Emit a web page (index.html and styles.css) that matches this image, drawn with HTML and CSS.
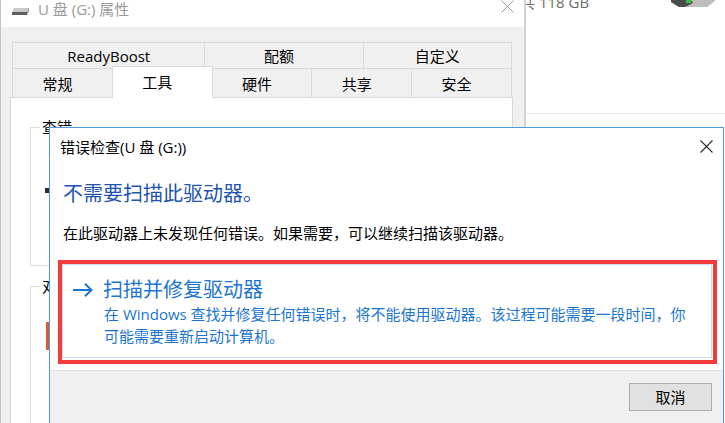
FILE: index.html
```html
<!DOCTYPE html>
<html lang="zh-CN">
<head>
    <meta charset="UTF-8">
    <meta name="viewport" content="width=device-width, initial-scale=1.0">
    <title>错误检查(U 盘 (G:))</title>
    <link rel="stylesheet" href="styles.css">
</head>
<body>
    <div class="desk">
        <!-- 属性窗口（在后面） -->
        <div class="props">
            <div class="props-title">
                <svg class="drive-sm" width="17" height="7" viewBox="0 0 17 7">
                    <polygon points="2,0 17,0 15,4 0,4" fill="#c9c9c9"/>
                    <polygon points="0,4 15,4 15,7 0,7" fill="#5e5e5e"/>
                    <polygon points="15,4 17,0 17,3 15,7" fill="#8a8a8a"/>
                </svg>
                <span class="props-name">U 盘 (G:) 属性</span>
                <svg class="props-close" width="13" height="13" viewBox="0 0 13 13">
                    <path d="M0.5 0.5 L12.5 12.5 M12.5 0.5 L0.5 12.5" stroke="#9b9b9b" stroke-width="1" fill="none"/>
                </svg>
            </div>
            <div class="props-body">
                <div class="tabs">
                    <div class="tab-row">
                        <div class="tab tab-wide">ReadyBoost</div>
                        <div class="tab">配额</div>
                        <div class="tab">自定义</div>
                    </div>
                    <div class="tab-row tab-row-low">
                        <div class="tab">常规</div>
                        <div class="tab active">工具</div>
                        <div class="tab">硬件</div>
                        <div class="tab">共享</div>
                        <div class="tab">安全</div>
                    </div>
                </div>
                <div class="panel">
                    <fieldset class="group group-check">
                        <legend>查错</legend>
                        <span class="check-icon"></span>
                    </fieldset>
                    <fieldset class="group group-opt">
                        <legend>对驱动器进行优化和碎片整理</legend>
                        <span class="opt-icon"></span>
                    </fieldset>
                </div>
            </div>
        </div>

        <!-- 资源管理器窗口（右侧） -->
        <div class="other">
            <div class="other-head">
                <span class="cap">共 118 GB</span>
                <svg class="drive-lg" width="44" height="7" viewBox="0 0 44 7">
                    <polygon points="0,0 44,0 44,1 36,7 8,7 0,2" fill="#bdbdbd"/>
                    <polygon points="0,0 20,0 22,3 14,7 8,7 0,2" fill="#4b4b4b"/>
                    <rect x="15" y="0" width="5" height="3" fill="#35c23d"/>
                </svg>
            </div>
        </div>
    </div>

    <!-- 错误检查对话框 -->
    <div class="dialog">
        <div class="dlg-title">
            <span>错误检查(U 盘 (G:))</span>
            <svg class="dlg-close" width="13" height="13" viewBox="0 0 13 13">
                <path d="M0.5 0.5 L12.5 12.5 M12.5 0.5 L0.5 12.5" stroke="#2b2b2b" stroke-width="1.1" fill="none"/>
            </svg>
        </div>
        <div class="dlg-main">
            <h1 class="instruction">不需要扫描此驱动器。</h1>
            <p class="content">在此驱动器上未发现任何错误。如果需要，可以继续扫描该驱动器。</p>
            <div class="annot">
                <div class="cmd-link">
                    <svg class="cmd-arrow" width="20" height="14" viewBox="0 0 20 14">
                        <path d="M0 7 H18.5 M12 0.8 L18.5 7 L12 13.2" stroke="#1a75d2" stroke-width="2" fill="none"/>
                    </svg>
                    <div class="cmd-title">扫描并修复驱动器</div>
                    <div class="cmd-desc">在 Windows 查找并修复任何错误时，将不能使用驱动器。该过程可能需要一段时间，你<br>可能需要重新启动计算机。</div>
                </div>
            </div>
        </div>
        <div class="dlg-footer">
            <button class="btn">取消</button>
        </div>
    </div>
</body>
</html>
```

FILE: styles.css
```css
* {
    box-sizing: border-box;
}
body {
    margin: 0;
    width: 725px;
    height: 423px;
    overflow: hidden;
    position: relative;
    background-color: #fff;
    font-family: "Open Sans", "Noto Sans CJK SC", sans-serif;
    font-size: 15px;
    color: #000;
}
.desk {
    display: flex;
    height: 423px;
}

/* 属性窗口 */
.props {
    position: relative;
    z-index: 2;
    flex: none;
    width: 526px;
    display: flex;
    flex-direction: column;
    background-color: #f0f0f0;
    border-left: 1px solid #c4c4c4;
    border-right: 2px solid #d2d2d2;
}
.props-title {
    height: 27px;
    flex: none;
    display: flex;
    align-items: flex-start;
    padding-left: 11px;
    padding-right: 10px;
    background-color: #fff;
}
.drive-sm {
    margin-top: 8px;
    margin-right: 9px;
}
.props-name {
    line-height: 18px;
    color: #9a9a9a;
}
.props-close {
    margin-left: auto;
}
.props-body {
    flex: 1;
    min-height: 0;
    display: flex;
    flex-direction: column;
    padding: 15px 11px 0 9px;
}
.tabs {
    margin: 0 1px 0 2px;
}
.tab-row {
    display: flex;
    height: 26px;
}
.tab-row-low {
    height: 29px;
}
.tab {
    flex: 1;
    display: flex;
    align-items: center;
    justify-content: center;
    border: 1px solid #d9d9d9;
    border-bottom: none;
    margin-left: -1px;
    padding-right: 10px;
    background-color: #f0f0f0;
}
.tab:first-child {
    margin-left: 0;
}
.tab-wide {
    flex: 1.3;
    padding-right: 0;
}
.tab-row:first-child .tab:last-child {
    padding-right: 0;
}
.tab.active {
    position: relative;
    z-index: 1;
    align-self: flex-start;
    height: 32px;
    margin-top: -2px;
    padding-bottom: 3px;
    background-color: #fff;
}
.panel {
    flex: 1;
    min-height: 0;
    overflow: hidden;
    padding: 0 19px 0 19px;
    background-color: #fff;
    border: 1px solid #d9d9d9;
    border-bottom: none;
}
.group {
    margin: 0;
    min-width: 0;
    padding: 0 0 0 9px;
    border: 1px solid #dcdcdc;
}
.group legend {
    padding: 0 2px;
    line-height: 16px;
}
.group-check {
    margin-top: 21px;
    height: 147px;
}
.group-opt {
    margin-top: 12px;
    height: 150px;
}
.check-icon {
    display: block;
    width: 10px;
    height: 5px;
    margin: 53px 0 0 5px;
    background-color: #2b2b2b;
}
.opt-icon {
    display: block;
    width: 10px;
    height: 28px;
    margin: 28px 0 0 6px;
    background-color: #dc5a2c;
}

/* 右侧窗口 */
.other {
    flex: 1;
    background-color: #fff;
}
.other-head {
    height: 114px;
    display: flex;
    align-items: flex-start;
    border-bottom: 1px solid #e8e8e8;
}
.cap {
    margin: -7px 0 0 -6px;
    line-height: 18px;
    color: #6d6d6d;
}
.drive-lg {
    margin-left: auto;
    margin-right: 10px;
}

/* 错误检查对话框 */
.dialog {
    position: absolute;
    z-index: 5;
    left: 49px;
    top: 127px;
    width: 675px;
    height: 296px;
    display: flex;
    flex-direction: column;
    background-color: #fff;
    border: 1px solid #4d9ae3;
    border-bottom: none;
}
.dlg-title {
    height: 37px;
    flex: none;
    display: flex;
    align-items: center;
    padding: 0 10px 0 10px;
    line-height: 20px;
}
.dlg-close {
    margin-left: auto;
}
.dlg-main {
    padding: 0 6px 0 8px;
}
.instruction {
    margin: 16px 0 0 5px;
    font-size: 20px;
    font-weight: normal;
    line-height: 26px;
    color: #2253b3;
}
.content {
    margin: 16px 0 0 5px;
    line-height: 20px;
}
.annot {
    margin-top: 17px;
    padding: 0 1px 2px 0;
    border: 4px solid #f23c3c;
}
.cmd-link {
    display: grid;
    grid-template-columns: 20px 1fr;
    column-gap: 10px;
    padding: 12px 10px 10px 10px;
    border: 1px solid #c6def3;
    color: #1a75d2;
}
.cmd-arrow {
    align-self: center;
}
.cmd-title {
    font-size: 20px;
    line-height: 26px;
}
.cmd-desc {
    grid-column: 2;
    padding-left: 1px;
    line-height: 22px;
}
.dlg-footer {
    flex: 1;
    margin-top: 6px;
    display: flex;
    justify-content: flex-end;
    align-items: flex-start;
    padding: 12px 11px 0 0;
    background-color: #f0f0f0;
    border-top: 1px solid #dfdfdf;
}
.btn {
    width: 83px;
    height: 28px;
    font: inherit;
    line-height: 20px;
    color: #000;
    background-color: #e1e1e1;
    border: 1px solid #adadad;
    padding: 0;
}
```
